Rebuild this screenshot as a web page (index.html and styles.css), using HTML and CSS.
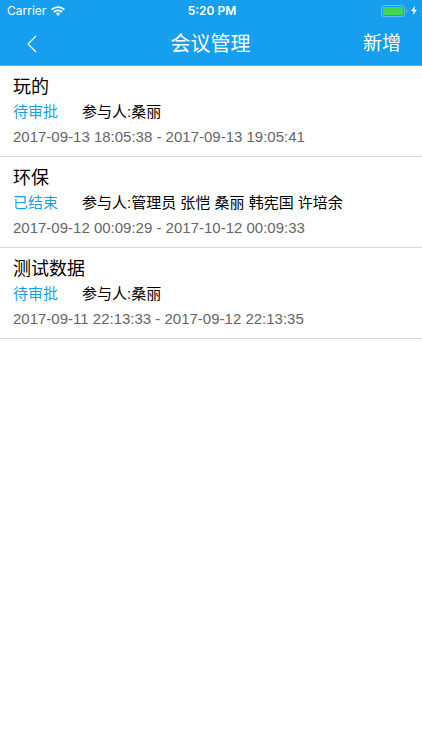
FILE: index.html
```html
<!DOCTYPE html>
<html lang="zh-CN">
<head>
<meta charset="utf-8">
<meta name="viewport" content="width=device-width, initial-scale=1">
<title>会议管理</title>
<link rel="stylesheet" href="styles.css">
</head>
<body>
<header class="header">
  <div class="status">
    <div class="status-side">
      <span>Carrier</span>
      <svg class="wifi" viewBox="0 0 14 10" aria-hidden="true">
        <path d="M.7 3.700C4.200.2 9.800.2 13.300 3.700M2.900 6C5.200 3.700 8.800 3.700 11.100 6" fill="none" stroke="#fff" stroke-width="1.800"/>
        <path d="M4.700 7.600a3.300 3.300 0 0 1 4.600 0L7 10z" fill="#fff"/>
      </svg>
    </div>
    <span class="clock">5:20 PM</span>
    <div class="status-side status-end">
      <svg class="battery" viewBox="0 0 27 12" aria-hidden="true">
        <rect x=".5" y=".5" width="23" height="11" rx="2.500" fill="none" stroke="#62bcf4"/>
        <rect x="2" y="2" width="20" height="8" rx="1" fill="#44d553"/>
        <path d="M25 4a2.200 2.200 0 0 1 0 4z" fill="#62bcf4"/>
      </svg>
      <svg class="bolt" viewBox="0 0 6 9" aria-hidden="true"><path d="M4 0 0 5h2.500L1.800 9 6 3.800H3.400z" fill="#fff"/></svg>
    </div>
  </div>
  <nav class="nav">
    <button class="back" type="button" aria-label="返回">
      <svg viewBox="0 0 10 18" aria-hidden="true"><path d="M9 1 1 9l8 8" fill="none" stroke="#fff" stroke-width="1.200"/></svg>
    </button>
    <h1 class="title">会议管理</h1>
    <button class="add" type="button">新增</button>
  </nav>
</header>
<main>
  <ul class="meetings">
    <li class="meeting">
      <h2 class="name">玩的</h2>
      <p class="people"><span class="state">待审批</span><span>参与人:桑丽</span></p>
      <p class="time">2017-09-13 18:05:38 - 2017-09-13 19:05:41</p>
    </li>
    <li class="meeting">
      <h2 class="name">环保</h2>
      <p class="people"><span class="state">已结束</span><span>参与人:管理员 张恺 桑丽 韩宪国 许培余</span></p>
      <p class="time">2017-09-12 00:09:29 - 2017-10-12 00:09:33</p>
    </li>
    <li class="meeting">
      <h2 class="name">测试数据</h2>
      <p class="people"><span class="state">待审批</span><span>参与人:桑丽</span></p>
      <p class="time">2017-09-11 22:13:33 - 2017-09-12 22:13:35</p>
    </li>
  </ul>
</main>
</body>
</html>
```
FILE: styles.css
```css
* { box-sizing: border-box; }
body, h1, h2, p, ul { margin: 0; padding: 0; }
body {
  background: #fff;
  color: #000;
  font-family: "Liberation Sans", "Noto Sans CJK SC", sans-serif;
}
.header {
  border-bottom: 1px solid #62b2e8;
  background: #169fee;
  color: #fff;
}
.status {
  display: grid;
  grid-template-columns: 1fr auto 1fr;
  align-items: center;
  height: 21px;
  padding: 0 5px 0 7px;
  font-family: Inter, sans-serif;
  font-size: 12px;
}
.status-side { display: flex; align-items: center; gap: 5px; }
.status-end { justify-content: flex-end; gap: 3px; }
.clock { font-weight: 600; }
.wifi { width: 14px; height: 10px; }
.battery { width: 27px; height: 12px; }
.bolt { width: 6px; height: 9px; }
.nav {
  display: grid;
  grid-template-columns: 1fr auto 1fr;
  align-items: center;
  height: 44px;
  padding: 1px 21px 0 20px;
}
.nav button {
  border: 0;
  padding: 0;
  background: none;
  color: inherit;
  font: inherit;
}
.back { justify-self: start; display: flex; }
.back svg { width: 24px; height: 18px; }
.title { font-size: 20px; font-weight: 400; line-height: 44px; }
.nav .add { justify-self: end; font-size: 19px; line-height: 44px; }
.meetings { list-style: none; }
.meeting {
  padding: 8px 13px 6px;
  border-bottom: 1px solid #d8d8d8;
}
.name { font-size: 18px; font-weight: 400; line-height: 26px; }
.people { display: flex; gap: 24px; font-size: 15px; line-height: 24px; }
.state { color: #169fee; }
.time { color: #666; font-size: 15px; line-height: 26px; }
```
